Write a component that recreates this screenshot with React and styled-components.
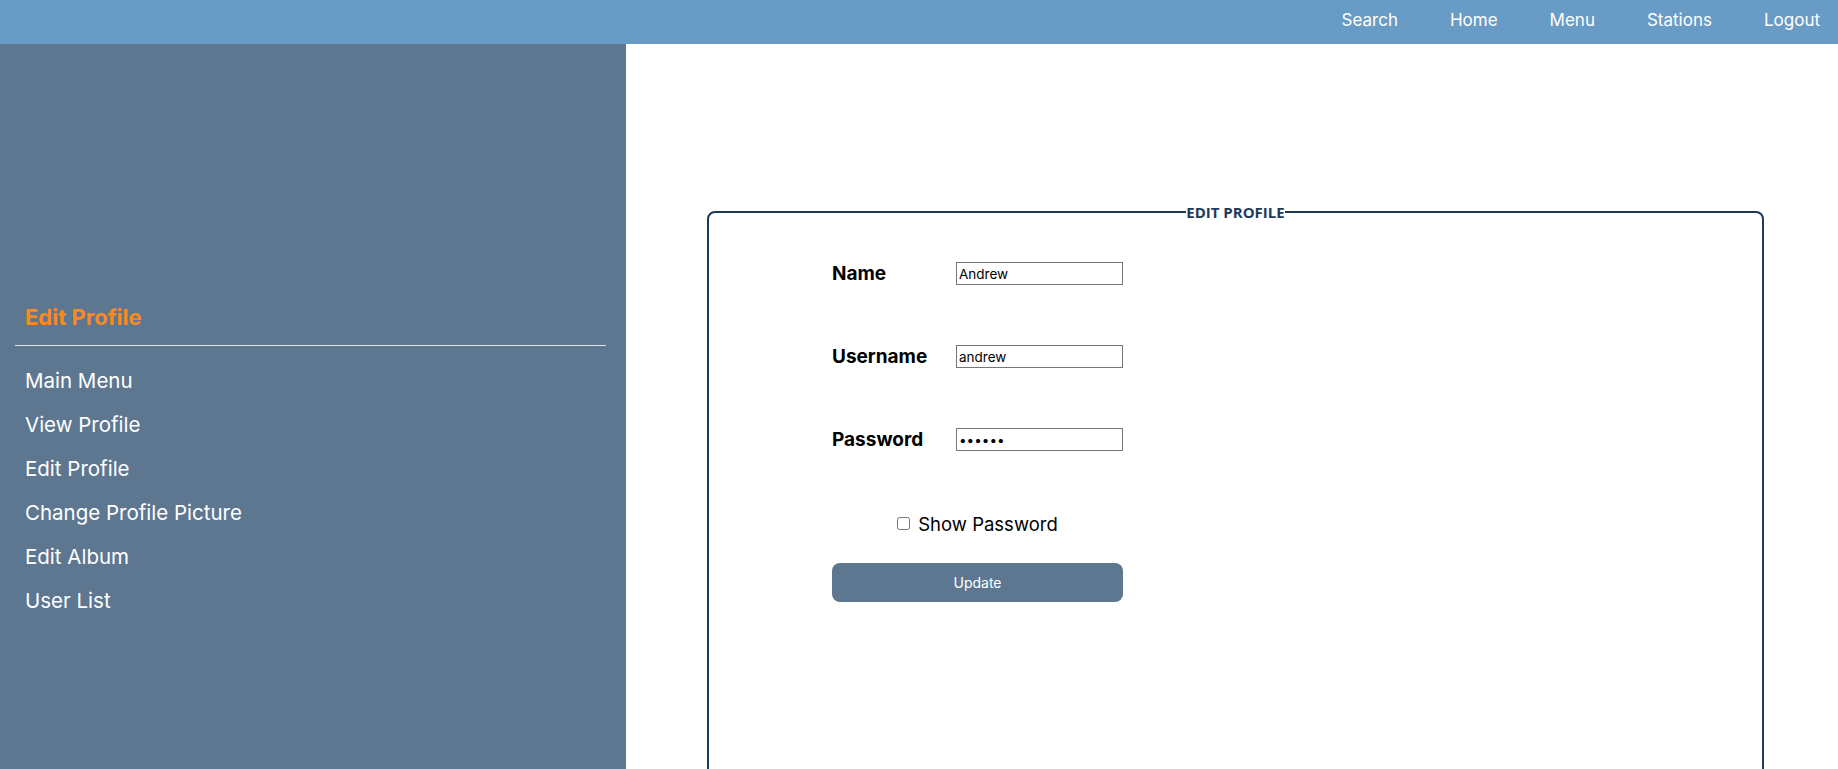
import React from "react";
import styled, { createGlobalStyle } from "styled-components";

const GlobalStyle = createGlobalStyle`
  html, body {
    margin: 0;
    padding: 0;
    height: 100%;
  }
  body {
    font-family: Inter, "Noto Sans", sans-serif;
    background: #ffffff;
  }
  #root {
    min-height: 100%;
  }
`;

const navLinks = ["Search", "Home", "Menu", "Stations", "Logout"];
const sideLinks = [
  "Main Menu",
  "View Profile",
  "Edit Profile",
  "Change Profile Picture",
  "Edit Album",
  "User List",
];

function App() {
  return (
    <Page>
      <GlobalStyle />
      <NavBar>
        {navLinks.map((l) => (
          <NavLink key={l}>{l}</NavLink>
        ))}
      </NavBar>
      <Body>
        <Sidebar>
          <SideTitle>Edit Profile</SideTitle>
          <Divider />
          <SideList>
            {sideLinks.map((l) => (
              <SideItem key={l}>{l}</SideItem>
            ))}
          </SideList>
        </Sidebar>
        <Main>
          <Fieldset>
            <Legend>EDIT PROFILE</Legend>
            <Form>
              <Row>
                <Label>Name</Label>
                <Input type="text" defaultValue="Andrew" />
              </Row>
              <Row>
                <Label>Username</Label>
                <Input type="text" defaultValue="andrew" />
              </Row>
              <Row>
                <Label>Password</Label>
                <Input type="password" defaultValue="andrew" />
              </Row>
              <CheckRow>
                <Check type="checkbox" />
                <span>Show Password</span>
              </CheckRow>
              <Button type="button">Update</Button>
            </Form>
          </Fieldset>
        </Main>
      </Body>
    </Page>
  );
}

const Page = styled.div`
  display: flex;
  flex-direction: column;
  height: 100vh;
  overflow: hidden;
`;

const NavBar = styled.nav`
  flex: 0 0 44px;
  box-sizing: border-box;
  display: flex;
  align-items: center;
  justify-content: flex-end;
  gap: 52px;
  padding: 0 18px 5px 0;
  background: #689cc6;
`;

const NavLink = styled.a`
  color: #ffffff;
  font-size: 17px;
  cursor: pointer;
`;

const Body = styled.div`
  flex: 1;
  display: flex;
  min-height: 0;
`;

const Sidebar = styled.aside`
  flex: 0 0 626px;
  background: #5d7791;
  padding-top: 257px;
  box-sizing: border-box;
`;

const SideTitle = styled.h2`
  margin: 0;
  padding-left: 25px;
  font-size: 22px;
  line-height: 32px;
  font-weight: 700;
  color: #f98a1d;
`;

const Divider = styled.hr`
  margin: 12px 20px 0 15px;
  border: none;
  border-top: 1px solid #e2e2e2;
`;

const SideList = styled.ul`
  list-style: none;
  margin: 13px 0 0;
  padding: 0;
`;

const SideItem = styled.li`
  padding-left: 25px;
  line-height: 44px;
  font-size: 20.5px;
  color: #ffffff;
  cursor: pointer;
`;

const Main = styled.main`
  flex: 1;
  padding: 158px 74px 0 81px;
`;

const Fieldset = styled.fieldset`
  margin: 0;
  min-height: 700px;
  padding: 40px 0 0 0;
  border: 2px solid #1e3a5a;
  border-radius: 8px;
`;

const Legend = styled.legend`
  margin: 0 auto;
  padding: 0;
  font-family: "Open Sans", sans-serif;
  font-weight: 700;
  font-size: 15px;
  color: #1e3a5a;
`;

const Form = styled.form`
  width: 291px;
  margin-left: 123px;
  display: flex;
  flex-direction: column;
`;

const Row = styled.div`
  display: grid;
  grid-template-columns: 124px 167px;
  align-items: center;
  height: 23px;
  margin-bottom: 60px;
`;

const Label = styled.label`
  font-weight: 700;
  font-size: 19px;
  color: #000000;
`;

const Input = styled.input`
  box-sizing: border-box;
  width: 167px;
  height: 23px;
  padding: 1px 2px;
  border: 1px solid #767676;
  font-family: Inter, sans-serif;
  font-size: 13.5px;
  color: #000000;
`;

const CheckRow = styled.div`
  display: flex;
  align-items: center;
  justify-content: center;
  gap: 8px;
  font-size: 18.5px;
  color: #000000;
  height: 23px;
  margin-top: 1px;
`;

const Check = styled.input`
  margin: 0;
  width: 13px;
  height: 13px;
`;

const Button = styled.button`
  margin-top: 28px;
  height: 39px;
  width: 291px;
  border: none;
  border-radius: 8px;
  background: #5d7791;
  color: #ffffff;
  font-family: Inter, sans-serif;
  font-size: 14px;
  cursor: pointer;
`;

export default App;
